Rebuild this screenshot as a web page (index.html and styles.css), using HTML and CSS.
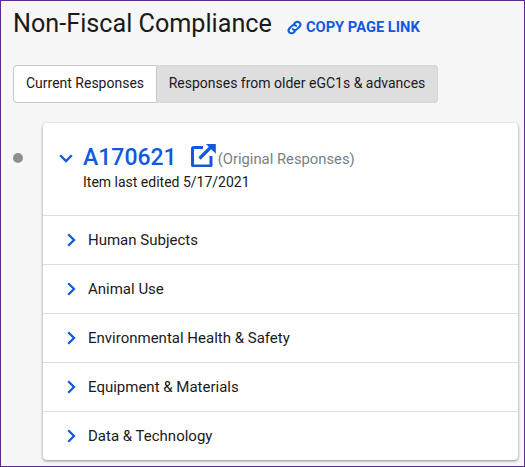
FILE: index.html
```html
<!DOCTYPE html>
<html lang="en">
<head>
<meta charset="utf-8">
<title>Non-Fiscal Compliance</title>
<link rel="stylesheet" href="styles.css">
</head>
<body>
<div class="page">
  <header class="title-row">
    <h1 class="title">Non-Fiscal Compliance</h1>
    <a class="copy-link" href="#">
      <svg class="link-icon" viewBox="0 0 16 16" aria-hidden="true"><path d="M6.300 9.700a3 3 0 0 0 4.400 0l2.600-2.600a3.100 3.100 0 0 0-4.400-4.400L7.800 3.800" fill="none" stroke="currentColor" stroke-width="2.200" stroke-linecap="round"/><path d="M9.700 6.300a3 3 0 0 0-4.400 0L2.700 8.900a3.100 3.100 0 0 0 4.400 4.400l1.100-1.100" fill="none" stroke="currentColor" stroke-width="2.200" stroke-linecap="round"/></svg>
      <span>COPY PAGE LINK</span>
    </a>
  </header>
  <nav class="tabs">
    <button class="tab tab-active">Current Responses</button>
    <button class="tab tab-idle">Responses from older eGC1s &amp; advances</button>
  </nav>
  <div class="timeline">
    <span class="dot"></span>
    <section class="card">
      <div class="card-head">
        <svg class="chev-down" viewBox="0 0 14 9" aria-hidden="true"><path d="M1.200 1.200 7 7l5.800-5.800" fill="none" stroke="currentColor" stroke-width="2.300"/></svg>
        <div class="head-text">
          <div class="head-line">
            <a class="item-id" href="#">A170621</a>
            <svg class="ext-icon" viewBox="0 0 25 23" aria-hidden="true"><path d="M12 3.500H2.800a1.300 1.300 0 0 0-1.300 1.300v15.900a1.300 1.300 0 0 0 1.300 1.300h15.900a1.300 1.300 0 0 0 1.300-1.300V12" fill="none" stroke="currentColor" stroke-width="3"/><path d="M8.500 14.500 20 3" fill="none" stroke="currentColor" stroke-width="3.200"/><path d="M15 0h9.800v9.800z" fill="currentColor"/></svg>
            <span class="original">(Original Responses)</span>
          </div>
          <div class="edited">Item last edited 5/17/2021</div>
        </div>
      </div>
      <div class="row"><svg class="chev-right" viewBox="0 0 9 14" aria-hidden="true"><path d="M1.200 1.200 7 7l-5.800 5.800" fill="none" stroke="currentColor" stroke-width="2.300"/></svg><span>Human Subjects</span></div>
      <div class="row"><svg class="chev-right" viewBox="0 0 9 14" aria-hidden="true"><path d="M1.200 1.200 7 7l-5.800 5.800" fill="none" stroke="currentColor" stroke-width="2.300"/></svg><span>Animal Use</span></div>
      <div class="row"><svg class="chev-right" viewBox="0 0 9 14" aria-hidden="true"><path d="M1.200 1.200 7 7l-5.800 5.800" fill="none" stroke="currentColor" stroke-width="2.300"/></svg><span>Environmental Health &amp; Safety</span></div>
      <div class="row"><svg class="chev-right" viewBox="0 0 9 14" aria-hidden="true"><path d="M1.200 1.200 7 7l-5.800 5.800" fill="none" stroke="currentColor" stroke-width="2.300"/></svg><span>Equipment &amp; Materials</span></div>
      <div class="row"><svg class="chev-right" viewBox="0 0 9 14" aria-hidden="true"><path d="M1.200 1.200 7 7l-5.800 5.800" fill="none" stroke="currentColor" stroke-width="2.300"/></svg><span>Data &amp; Technology</span></div>
    </section>
  </div>
</div>
</body>
</html>
```
FILE: styles.css
```css
* { box-sizing: border-box; }
html, body { margin: 0; padding: 0; }
body {
  font-family: Roboto, "Liberation Sans", sans-serif;
  color: #1a1a1a;
  overflow: hidden;
}
.page {
  width: 525px;
  height: 467px;
  background: #f7f7f7;
  border: 1px solid #5f2a8f;
  padding: 8px 6px 0 12px;
  overflow: hidden;
}
.title-row {
  display: flex;
  align-items: center;
  height: 30px;
}
.title {
  margin: 0;
  font-size: 25.200px;
  font-weight: 400;
  line-height: 30px;
  color: #1a1a1a;
}
.copy-link {
  display: flex;
  align-items: center;
  margin-left: 15px;
  margin-top: 6px;
  gap: 4px;
  color: #1259e0;
  font-size: 14.700px;
  font-weight: 700;
  text-decoration: none;
}
.link-icon { width: 15px; height: 15px; }
.tabs {
  display: flex;
  margin-top: 26px;
}
.tab {
  height: 38px;
  font: 400 14px Roboto, "Liberation Sans", sans-serif;
  color: #1a1a1a;
  padding: 0 0 2px;
  white-space: nowrap;
}
.tab-active {
  width: 144px;
  background: #fff;
  border: 1px solid #c9c9c9;
  border-radius: 4px 0 0 4px;
}
.tab-idle {
  width: 281px;
  background: #dedede;
  border: 1px solid #d6d6d6;
  border-left: 0;
  border-radius: 0 4px 4px 0;
}
.timeline {
  display: flex;
  align-items: flex-start;
  margin-top: 20px;
}
.dot {
  width: 10px;
  height: 10px;
  margin-top: 30px;
  border-radius: 50%;
  background: #8f8f8f;
  flex: none;
}
.card {
  width: 475px;
  margin-left: 20px;
  background: #fff;
  border-radius: 4px;
  box-shadow: 0 1px 3px rgba(0,0,0,.45);
}
.card-head {
  display: flex;
  align-items: flex-start;
  height: 92px;
  padding: 20px 0 0 16px;
}
.chev-down {
  width: 14px;
  height: 9px;
  margin-top: 11px;
  color: #1259e0;
  flex: none;
}
.head-text { margin-left: 10px; }
.head-line {
  display: flex;
  align-items: center;
  height: 28px;
}
.item-id {
  font-size: 23px;
  font-weight: 500;
  color: #1259e0;
  text-decoration: none;
}
.ext-icon {
  width: 25px;
  height: 23px;
  margin-left: 14px;
  margin-top: -3px;
  color: #1259e0;
}
.original {
  font-size: 14.800px;
  color: #7a7f86;
  margin-left: 2px;
  margin-top: 4px;
}
.edited {
  font-size: 14px;
  line-height: 18px;
  margin-top: 2px;
  color: #1a1a1a;
}
.row {
  display: flex;
  align-items: center;
  height: 49px;
  padding-left: 24px;
  border-top: 1px solid #dedede;
  font-size: 15px;
  color: #1a1a1a;
}
.row span { margin-left: 12px; }
.chev-right {
  width: 9px;
  height: 14px;
  color: #1259e0;
  flex: none;
}
```
